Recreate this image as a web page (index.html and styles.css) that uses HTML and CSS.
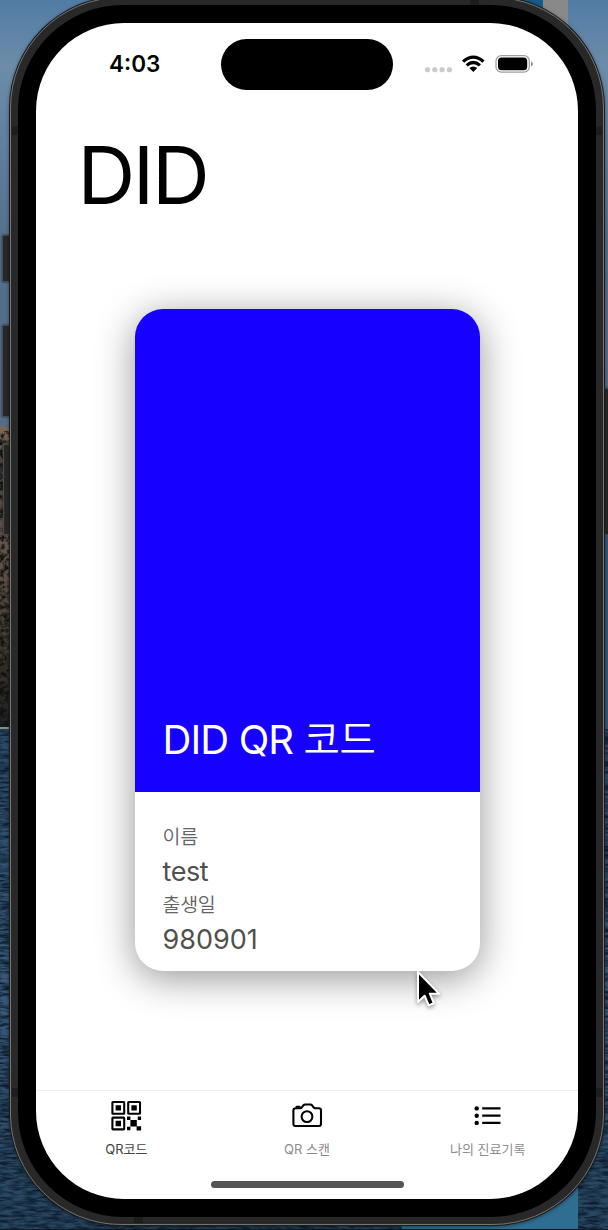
FILE: index.html
```html
<!DOCTYPE html>
<html lang="ko">
<head>
<meta charset="utf-8">
<title>DID</title>
<link rel="stylesheet" href="styles.css">
</head>
<body>
<div class="desktop">
  <svg class="wallpaper" width="608" height="1230" viewBox="0 0 608 1230" aria-hidden="true">
    <defs>
      <linearGradient id="sky" x1="0" y1="0" x2="0" y2="1"><stop offset="0" stop-color="#527ca5"/><stop offset=".12" stop-color="#6c8ca9"/><stop offset=".45" stop-color="#526f8c"/><stop offset="1" stop-color="#536c80"/></linearGradient>
      <linearGradient id="rock" x1="0" y1="0" x2="0" y2="1"><stop offset="0" stop-color="#806a58"/><stop offset=".15" stop-color="#4d4338"/><stop offset=".4" stop-color="#67584b"/><stop offset=".8" stop-color="#3b342c"/><stop offset="1" stop-color="#1c1f22"/></linearGradient>
      <linearGradient id="sea" x1="0" y1="0" x2="0" y2="1"><stop offset="0" stop-color="#2b4966"/><stop offset=".5" stop-color="#395a79"/><stop offset="1" stop-color="#28455f"/></linearGradient>
      <filter id="waves" x="0" y="0" width="100%" height="100%" color-interpolation-filters="sRGB"><feTurbulence type="fractalNoise" baseFrequency=".08 .4" numOctaves="3" seed="4"/><feColorMatrix values="0 0 0 0 .05  0 0 0 0 .12  0 0 0 0 .19  2.4 0 0 0 -.8"/></filter>
      <filter id="grit" x="0" y="0" width="100%" height="100%" color-interpolation-filters="sRGB"><feTurbulence type="fractalNoise" baseFrequency=".22" numOctaves="3" seed="8"/><feColorMatrix values="0 0 0 0 .07  0 0 0 0 .07  0 0 0 0 .06  3 0 0 0 -1.1"/></filter>
    </defs>
    <rect width="608" height="550" fill="url(#sky)"/>
    <rect x="543" width="25" height="45" fill="#898989"/>
    <rect x="500" width="43" height="20" fill="#175b8b"/>
    <path d="M0 425L14 431V729H0Z" fill="url(#rock)"/>
    <rect y="431" width="14" height="297" filter="url(#grit)"/>
    <rect y="729" width="608" height="501" fill="url(#sea)"/>
    <rect x="598" y="536" width="10" height="193" fill="#315778"/>
    <rect y="729" width="608" height="501" filter="url(#waves)"/>
    <rect y="727" width="12" height="2" fill="#87908f"/>
    <rect x="402" y="1150" width="176" height="80" fill="#2f6e91"/>
    <rect y="1229" width="608" height="1" fill="#111a24"/>
  </svg>
  <i class="key key-action"></i><i class="key key-up"></i><i class="key key-down"></i><i class="key key-power"></i>
  <div class="phone">
    <svg class="seams" width="594" height="1228" viewBox="10 -3 594 1228" aria-hidden="true"><path d="M12 126h7v9h-7zM595 126h7v9h-7zM12 1088h7v9h-7zM595 1088h7v9h-7zM470-3h9v9h-9zM134 1216h9v7h-9z" fill="#1d1d1d"/></svg>
    <div class="bezel">
      <main class="screen">
        <header class="status">
          <time class="clock">4:03</time>
          <span class="island"></span>
          <svg class="signals" width="112" height="24" viewBox="0 0 112 24" aria-label="상태">
            <g fill="#cbcbcb"><rect x="1" y="12.2" width="5" height="5" rx="1.8"/><rect x="8.3" y="12.2" width="5" height="5" rx="1.8"/><rect x="15.6" y="12.2" width="5" height="5" rx="1.8"/><rect x="22.9" y="12.2" width="5" height="5" rx="1.8"/></g>
            <path d="M38 5.500Q49.300-4.700 60.600 5.500L58.400 7.800Q49.300-.2 40.200 7.800ZM41.600 9.300Q49.300 2.400 57 9.300L54.800 11.500Q49.300 6.800 43.800 11.500ZM45.400 13Q49.300 9.800 53.200 13L49.300 17Z"/>
            <rect x="72" y=".7" width="33.3" height="16.4" rx="5.2" fill="none" stroke="#a0a0a0" stroke-width="1.3"/>
            <rect x="74" y="2.6" width="29.2" height="12.6" rx="3.5"/>
            <path d="M107 6.3Q109 7.3 109 8.9T107 11.5Z" fill="#929292"/>
          </svg>
        </header>
        <h1 class="title">DID</h1>
        <section class="card">
          <div class="cover"><h2 class="cover-title">DID QR <span class="hangul">코드</span></h2></div>
          <dl class="details">
            <dt>이름</dt><dd class="name">test</dd>
            <dt>출생일</dt><dd class="birth">980901</dd>
          </dl>
        </section>
        <nav class="tabs">
          <div class="tab active">
            <svg class="icon" width="32" height="32" viewBox="0 0 32 32"><g fill="none" stroke="#000" stroke-width="2.1"><rect x="2.4" y="2" width="11.8" height="11.8" rx=".6"/><rect x="18.2" y="2" width="11.8" height="11.8" rx=".6"/><rect x="2.4" y="17.6" width="11.8" height="11.8" rx=".6"/></g><path d="M5.6 5.2H11v5.4H5.6zM21.4 5.2h5.4v5.4h-5.4zM5.6 20.8H11v5.4H5.6zM17 16.6h3.4V20H17zM27.7 16.6h3.4V20h-3.4zM20.4 20h6.4v6.4h-6.4zM17 26.8h3.4v3.4H17zM26.6 26.2h4.5v4.3h-4.5z"/></svg>
            <span class="qr-label">QR코드</span>
          </div>
          <div class="tab">
            <svg class="icon" width="32" height="32" viewBox="0 0 32 32" fill="none" stroke="#000" stroke-width="2.1" stroke-linejoin="round"><path d="M4.700 8.300h4.600q.8 0 1.500-.9l1.700-2.200q.6-.7 1.500-.7h5.400q.9 0 1.500.7l1.700 2.200q.7.9 1.500.9h3.800q2.100 0 2.100 2.200v13.200q0 2.300-2.300 2.300h-23q-2.300 0-2.300-2.300V10.500q0-2.200 2.300-2.200Z"/><path d="M5.600 6.700h3" stroke-linecap="round"/><circle cx="16" cy="16.600" r="5.400"/></svg>
            <span class="scan-label">QR 스캔</span>
          </div>
          <div class="tab">
            <svg class="icon" width="32" height="32" viewBox="0 0 32 32"><g><circle cx="4.7" cy="8.4" r="2.2"/><circle cx="4.7" cy="15.7" r="2.2"/><circle cx="4.7" cy="22.9" r="2.2"/></g><path d="M10.200 8.400H28.500M10.200 15.700H28.500M10.200 22.900H28.500" stroke="#000" stroke-width="2.200"/></svg>
            <span class="record-label">나의 진료기록</span>
          </div>
        </nav>
        <span class="home"></span>
      </main>
    </div>
  </div>
  <svg class="cursor" width="30" height="42" viewBox="0 0 30 42" aria-hidden="true"><path d="M3 2V32L9.600 25.700L13.800 35.300L18.800 33.100L14.800 23.700H24.200Z" stroke="#fff" stroke-width="2" stroke-linejoin="round"/></svg>
</div>
</body>
</html>
```
FILE: styles.css
```css
* { box-sizing: border-box; }
body { margin: 0; font-family: Inter, "Noto Sans CJK KR", sans-serif; }
.desktop { position: relative; width: 608px; height: 1230px; overflow: hidden; background: #294662; }
.wallpaper { position: absolute; inset: 0; }
.key { position: absolute; background: #272727; border: 1px solid #494b4d; box-shadow: 0 0 2px #1b2a37; }
.key-action { left: 2px; top: 235px; width: 10px; height: 47px; }
.key-up { left: 2px; top: 325px; width: 10px; height: 92px; }
.key-down { left: 3px; top: 444px; width: 9px; height: 91px; }
.key-power { left: 602px; top: 388px; width: 10px; height: 147px; }
.phone { position: absolute; left: 10px; top: -3px; width: 594px; height: 1228px; padding: 7px; border-radius: 111px; background: #282828; border: 1px solid #747474; box-shadow: 0 0 0 1px #1b1d1e, 0 1px 4px #000a; }
.seams { position: absolute; left: -1px; top: -1px; }
.bezel { position: relative; height: 1212px; padding: 18px; border-radius: 105px; background: #000; }
.screen { height: 1176px; display: flex; flex-direction: column; align-items: center; background: #fff; border-radius: 88px; overflow: hidden; }
.status { width: 100%; flex: 0 0 66.5px; padding-top: 15.5px; display: grid; grid-template-columns: 184.5px 172.5px 1fr; align-items: center; }
.clock { padding-left: 73px; font-size: 22.5px; line-height: 30px; font-weight: 600; }
.island { height: 51px; border-radius: 26px; background: #000; }
.signals { margin: 5px 0 0 31px; }
.title { align-self: flex-start; margin: 35.5px 0 0 41.5px; font-size: 80px; line-height: 100px; height: 100px; font-weight: 370; letter-spacing: -2.4px; }
.card { width: 345px; flex: 0 0 662.5px; margin-top: 83.5px; border-radius: 28px; overflow: hidden; background: #fff; box-shadow: 0 7px 38px rgba(0,0,0,.42); }
.cover { height: 483.5px; background: #1600ff; display: flex; align-items: flex-end; padding: 0 28px 24px; }
.cover-title { margin: 0; color: #fff; font-size: 40px; line-height: 56px; font-weight: 370; letter-spacing: -.9px; white-space: nowrap; }
.hangul { font-size: 39.5px; font-weight: 350; letter-spacing: -.3px; }
.details { margin: 0; padding: 30px 28px 0; }
.details dt { font-size: 19.5px; line-height: 31.5px; color: #646464; font-weight: 350; letter-spacing: -.3px; }
.details dd { margin: 0; font-size: 27px; line-height: 36.5px; color: #505050; }
.name { letter-spacing: -.4px; }
.tabs { width: 100%; margin-top: auto; flex: 0 0 109px; border-top: 1px solid #ececec; padding-top: 9px; display: grid; grid-template-columns: repeat(3, 1fr); }
.tab { display: flex; flex-direction: column; align-items: center; font-size: 13px; line-height: 20px; color: #8d8d8d; gap: 6.5px; }
.active { color: #444; }
.icon { display: block; }
.home { position: absolute; left: 193px; top: 1176px; width: 193px; height: 7px; border-radius: 4px; background: #555; }
.cursor { position: absolute; left: 415px; top: 970px; filter: drop-shadow(0 2px 2px #0006); }
```
